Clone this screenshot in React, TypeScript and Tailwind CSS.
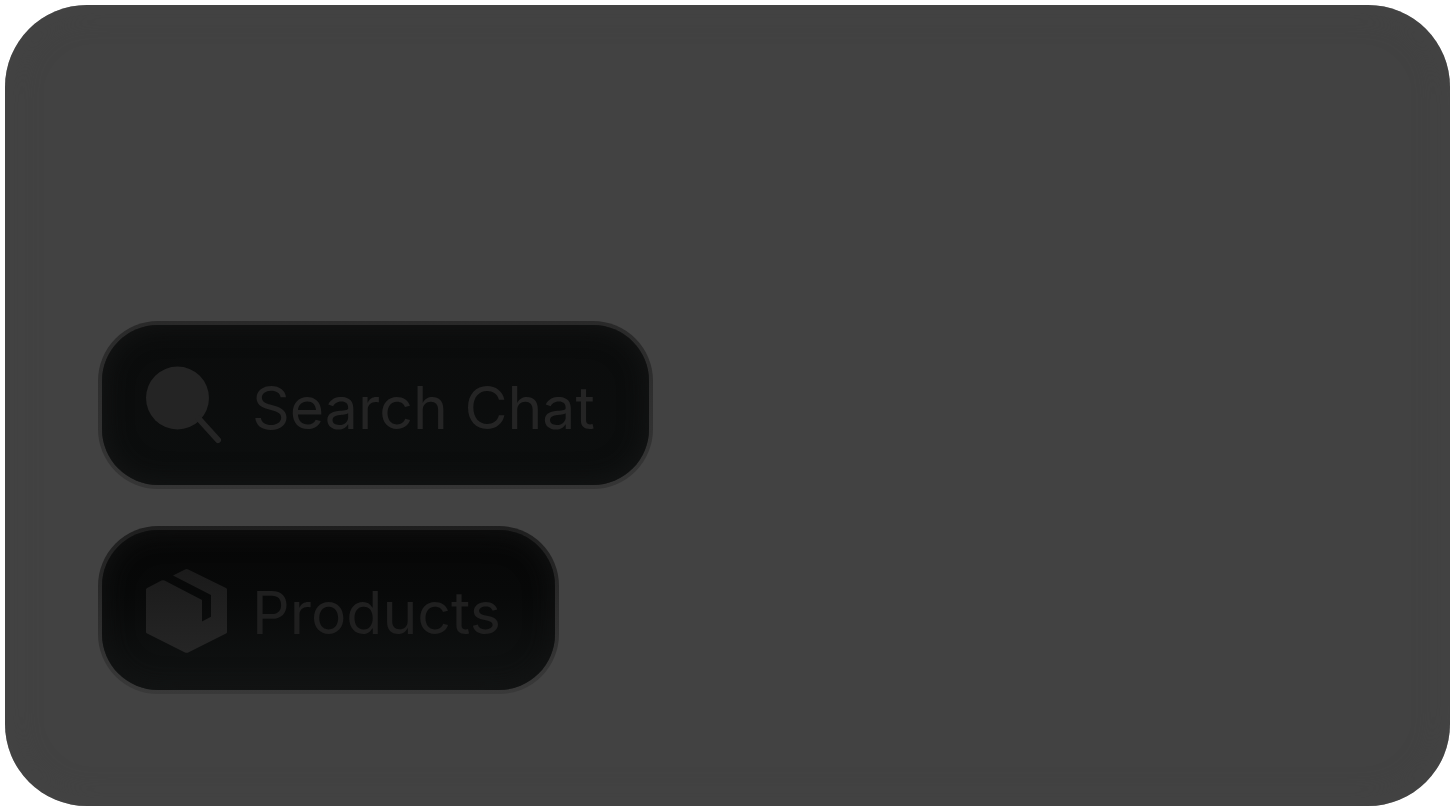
import React from 'react';

function SearchIcon() {
  return (
    <svg viewBox="0 0 82 86" className="w-[82px] h-[86px] shrink-0" aria-hidden="true">
      <circle cx="31.5" cy="36" r="31.5" fill="#242424" />
      <path d="M53 57 L72 78" stroke="#242424" strokeWidth="6" strokeLinecap="round" />
    </svg>
  );
}

function BoxIcon() {
  return (
    <svg viewBox="0 0 82 86" className="w-[82px] h-[86px] shrink-0" aria-hidden="true">
      <defs>
        <linearGradient id="box-fill" x1="0" y1="0" x2="0" y2="1">
          <stop offset="0" stopColor="#1a1a1a" />
          <stop offset="1" stopColor="#252525" />
        </linearGradient>
      </defs>
      <path
        fill="url(#box-fill)"
        d="M1.2 21 L15.5 13.6 Q17 12.8 18.5 13.6 L56 33 V54.5 L65 49.8 V28 L27 8.4 L39 2.4 Q40.6 1.6 42.2 2.4 L80 21 Q81 21.5 81 22.6 V65 Q81 66 80 66.5 L42.2 85.4 Q40.6 86.2 39 85.4 L1.2 66.5 Q0 66 0 65 V22.6 Q0 21.5 1.2 21 Z"
      />
    </svg>
  );
}

const actions = [
  {
    label: 'Search Chat',
    icon: <SearchIcon />,
    surface:
      'text-[#242424] shadow-[inset_0_0_28px_#161717] [background:linear-gradient(#0b0c0c,#0c0e0e)_padding-box,linear-gradient(#292929,#353535)_border-box]',
  },
  {
    label: 'Products',
    icon: <BoxIcon />,
    surface:
      'text-[#1f1f1f] shadow-[inset_0_0_28px_#131414] [background:linear-gradient(#070707,#080909_40%,#111313)_padding-box,linear-gradient(#1e1e1e,#393939)_border-box]',
  },
];

export default function App() {
  return (
    <div className="min-h-screen flex bg-white p-[5px] font-['Inter','Liberation_Sans',sans-serif]">
      <main className="flex-1 flex flex-col items-start justify-end gap-[37px] rounded-[82px] bg-[#424242] pl-[93px] pb-28 shadow-[inset_0_0_32px_#444444]">
        {actions.map((action) => (
          <button
            key={action.label}
            type="button"
            className={`flex items-center gap-6 h-[168px] pl-11 pr-[54px] rounded-[60px] border-4 border-transparent text-[59px] leading-none whitespace-nowrap ${action.surface}`}
          >
            {action.icon}
            <span className="pt-1">{action.label}</span>
          </button>
        ))}
      </main>
    </div>
  );
}
